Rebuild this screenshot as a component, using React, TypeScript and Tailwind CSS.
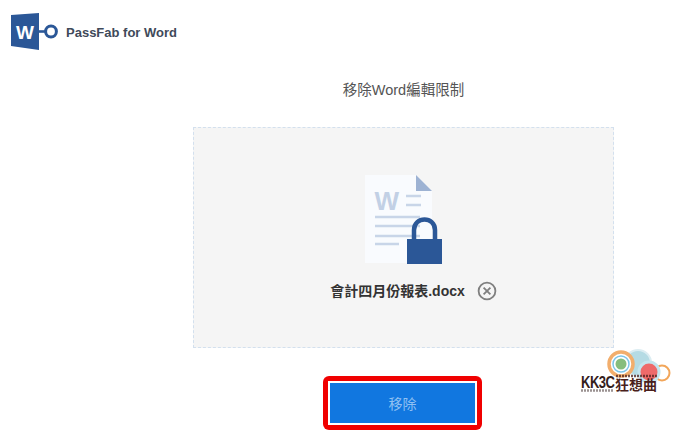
const cjk = { fontFamily: '"Liberation Sans", "Noto Sans CJK TC", sans-serif' };

function Logo() {
  return (
    <div className="relative w-[50px] h-[38px] shrink-0">
      <svg width="50" height="38" viewBox="0 0 50 38">
        <path d="M0 2 L28 0 V37 L0 33 Z" fill="#2b5797" />
        <path d="M28 18.5 H36" stroke="#2b5797" strokeWidth="2.6" />
        <circle cx="40" cy="18.5" r="5.4" fill="none" stroke="#2b5797" strokeWidth="3" />
      </svg>
      <span className="absolute left-[5px] top-[10px] text-[19px] leading-[20px] font-bold text-white">W</span>
    </div>
  );
}

function LockedDoc() {
  return (
    <svg width="80" height="92" viewBox="0 0 80 92">
      <path d="M3 2 H54 L70 18 V90 H3 Z" fill="#f9fbfe" />
      <path d="M54 2 L70 18 H54 Z" fill="#9db2d3" />
      <text x="12.5" y="37" fontSize="26" fontWeight="700" fill="#c2d0e5">W</text>
      <path d="M44 23 H59 M44 32 H59" stroke="#c8d5e8" strokeWidth="2.4" />
      <path d="M13 44 H58 M13 53 H58 M13 63 H58 M13 71 H37" stroke="#c8d5e8" strokeWidth="2.4" />
      <path d="M52 66 V57 C52 43 73 43 73 57 V66" fill="none" stroke="#2b5797" strokeWidth="4.5" />
      <rect x="45" y="66" width="35" height="25" fill="#2b5797" />
    </svg>
  );
}

function ClearIcon() {
  return (
    <svg width="20" height="20" viewBox="0 0 20 20" className="shrink-0">
      <circle cx="10" cy="10" r="8.4" fill="none" stroke="#7f7f7f" strokeWidth="1.8" />
      <path d="M6.6 6.6 L13.4 13.4 M13.4 6.6 L6.6 13.4" stroke="#7f7f7f" strokeWidth="1.8" />
    </svg>
  );
}

function Watermark() {
  return (
    <div className="absolute left-[579px] top-[348px] w-[100px] h-[48px]">
      <svg width="100" height="48" viewBox="0 0 100 48" className="absolute left-0 top-0">
        <circle cx="83" cy="25" r="7.5" fill="#fff" stroke="#f2a65a" strokeWidth="2" />
        <circle cx="59" cy="15" r="13" fill="#b5dbe4" stroke="#dcedf2" strokeWidth="2" />
        <circle cx="70" cy="24" r="10" fill="#ee6a6a" stroke="#c4e5ee" strokeWidth="3" />
        <circle cx="42" cy="16" r="12" fill="#fff" stroke="#f2ae6d" strokeWidth="3.5" />
        <circle cx="42" cy="16" r="8" fill="#fff" stroke="#7cc4e8" strokeWidth="1.5" />
        <circle cx="42" cy="16" r="5.5" fill="#86bd7c" />
        {/* specks of caption too small to read in the reference */}
        <path d="M37 28 H78" stroke="#4a1f1c" strokeWidth="2.5" strokeDasharray="2 1" opacity="0.75" />
        <path d="M2 42.5 H34" stroke="#4a3a38" strokeWidth="2.5" strokeDasharray="2 1" opacity="0.55" />
      </svg>
      <span className="absolute left-[2px] top-[26px] origin-top scale-y-[1.25] text-[13px] leading-[13px] font-bold tracking-[-0.5px] text-[#33201c]">
        KK3C
      </span>
      <span className="absolute left-[36px] top-[29px] text-[14px] leading-[16px] font-bold text-[#4a1f1c]">
        狂想曲
      </span>
    </div>
  );
}

export default function App() {
  return (
    <div className="relative w-[700px] h-[436px] bg-white overflow-hidden" style={cjk}>
      <header className="flex items-start gap-[5px] pl-[11px] pt-[13px] h-[77px]">
        <Logo />
        <span className="mt-[11px] text-[13px] leading-[18px] font-bold text-[#3f4a5a]">PassFab for Word</span>
      </header>

      <main className="ml-[193px] w-[421px] flex flex-col items-center">
        <h1 className="text-[14.5px] leading-[26px] font-normal text-[#555]">移除Word編輯限制</h1>
        <div className="mt-[24px] w-full h-[221px] bg-[#f5f5f5] border border-dashed border-[#d3e0ee] flex flex-col items-center">
          <div className="mt-[45px] ml-[-4px]">
            <LockedDoc />
          </div>
          <div className="mt-[16px] ml-[20px] flex items-center gap-[12px]">
            <span className="text-[14px] leading-[20px] font-bold text-[#333]">會計四月份報表.docx</span>
            <ClearIcon />
          </div>
        </div>
        <div className="mt-[28px] self-start ml-[130px] w-[159px] h-[54px] p-[5px] rounded-[6px] bg-[#f00000]">
          <button
            type="button"
            className="w-full h-full pt-[3px] border-2 border-white bg-[#1177e0] text-[14px] text-[#8fc0f2]"
          >
            移除
          </button>
        </div>
      </main>

      <Watermark />
    </div>
  );
}
